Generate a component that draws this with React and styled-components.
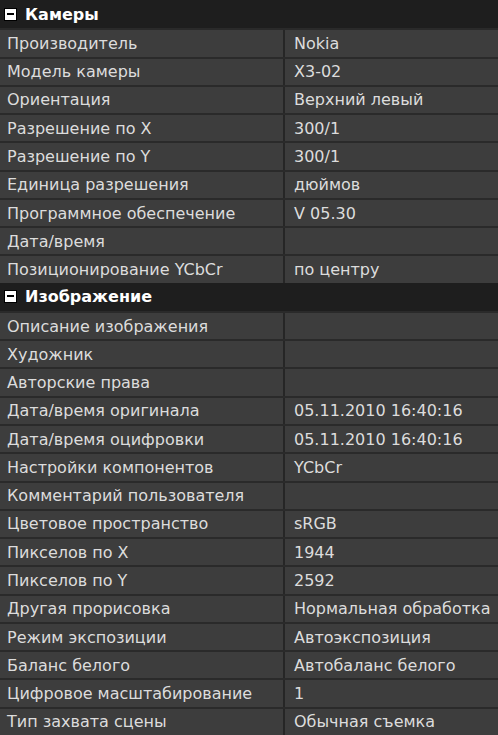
import React from 'react'
import styled, { createGlobalStyle } from 'styled-components'

const sections = [
  {
    title: 'Камеры',
    rows: [
      ['Производитель', 'Nokia'],
      ['Модель камеры', 'X3-02'],
      ['Ориентация', 'Верхний левый'],
      ['Разрешение по X', '300/1'],
      ['Разрешение по Y', '300/1'],
      ['Единица разрешения', 'дюймов'],
      ['Программное обеспечение', 'V 05.30'],
      ['Дата/время', ''],
      ['Позиционирование YCbCr', 'по центру'],
    ],
  },
  {
    title: 'Изображение',
    rows: [
      ['Описание изображения', ''],
      ['Художник', ''],
      ['Авторские права', ''],
      ['Дата/время оригинала', '05.11.2010 16:40:16'],
      ['Дата/время оцифровки', '05.11.2010 16:40:16'],
      ['Настройки компонентов', 'YCbCr'],
      ['Комментарий пользователя', ''],
      ['Цветовое пространство', 'sRGB'],
      ['Пикселов по X', '1944'],
      ['Пикселов по Y', '2592'],
      ['Другая прорисовка', 'Нормальная обработка'],
      ['Режим экспозиции', 'Автоэкспозиция'],
      ['Баланс белого', 'Автобаланс белого'],
      ['Цифровое масштабирование', '1'],
      ['Тип захвата сцены', 'Обычная съемка'],
    ],
  },
]

const App = () => {
  return (
    <>
      <Global />
      <Grid>
        {sections.map((s) => (
          <React.Fragment key={s.title}>
            <Header>
              <Toggle />
              {s.title}
            </Header>
            {s.rows.map(([name, value]) => (
              <Row key={name}>
                <Name>{name}</Name>
                <Value>{value}</Value>
              </Row>
            ))}
          </React.Fragment>
        ))}
      </Grid>
    </>
  )
}

export default App

// COMPONENTS

const Global = createGlobalStyle`
  html, body {
    margin: 0;
    background: #202020;
  }
`
const Grid = styled.div`
  height: 735px;
  width: 498px;
  display: grid;
  grid-template-rows: repeat(26, 1fr);
  font-family: 'DejaVu Sans', Verdana, sans-serif;
  font-size: 16px;
  overflow: hidden;
`
const Header = styled.div`
  background: #1e1e1e;
  color: #fff;
  font-weight: bold;
  display: flex;
  align-items: center;
  gap: 8px;
  padding-left: 4px;
  font-size: 16px;
`
const Toggle = styled.span`
  width: 11px;
  height: 11px;
  background: #fff;
  border: 1px solid #000;
  position: relative;
  flex: none;

  &::after {
    content: '';
    position: absolute;
    left: 2px;
    right: 2px;
    top: 4px;
    height: 2px;
    background: #000;
  }
`
const Row = styled.div`
  display: grid;
  grid-template-columns: 285px 1fr;
  background: #3d3d3d;
  border-top: 2px solid #2a2a2a;
  color: #dcdcdc;
`
const Name = styled.div`
  display: flex;
  align-items: center;
  padding-left: 7px;
  white-space: nowrap;
  overflow: hidden;
  border-right: 2px solid #262626;
`
const Value = styled.div`
  display: flex;
  align-items: center;
  padding-left: 9px;
  white-space: nowrap;
  overflow: hidden;
`
